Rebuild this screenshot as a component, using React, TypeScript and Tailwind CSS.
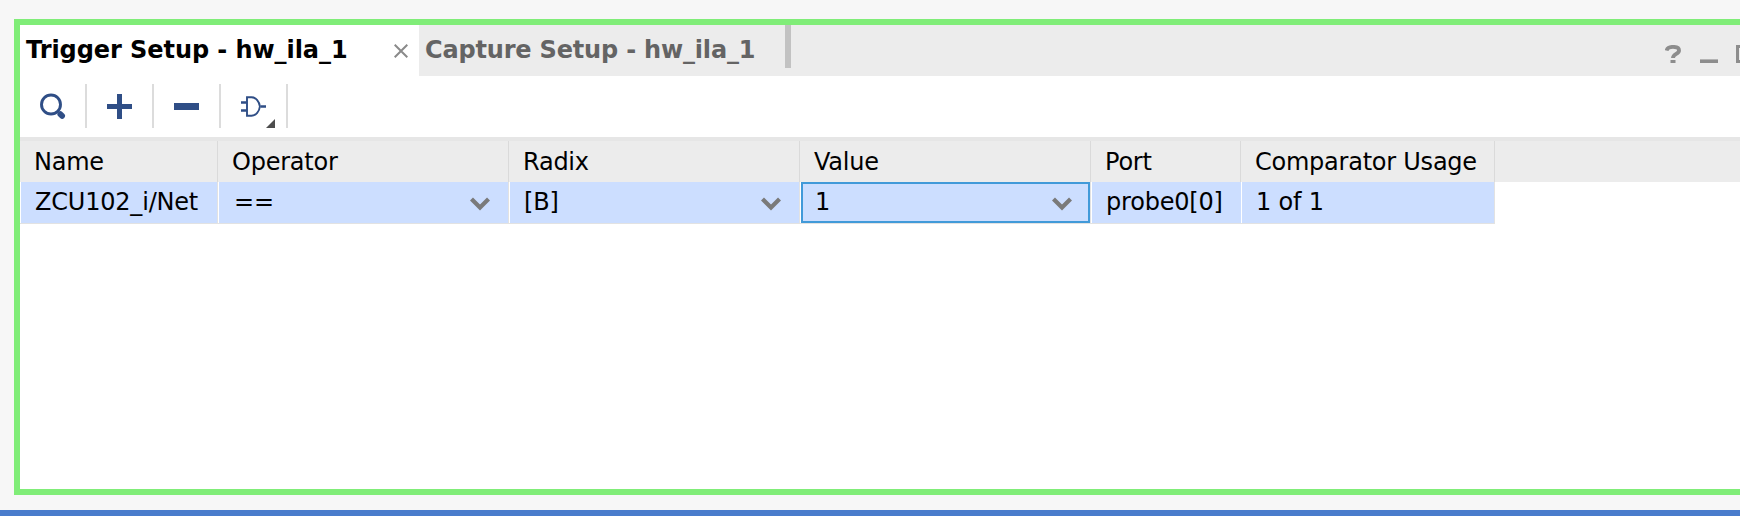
import type { ReactNode } from "react";

const columns = [
  { name: "Name", width: "w-[198px]", value: "ZCU102_i/Net", combo: false },
  { name: "Operator", width: "w-[291px]", value: "==", combo: true },
  { name: "Radix", width: "w-[291px]", value: "[B]", combo: true },
  { name: "Value", width: "w-[291px]", value: "1", combo: true },
  { name: "Port", width: "w-[150px]", value: "probe0[0]", combo: false },
  { name: "Comparator Usage", width: "w-[254px]", value: "1 of 1", combo: false },
];

function Tool({ label, children }: { label: string; children: ReactNode }) {
  return (
    <button
      aria-label={label}
      className="flex h-[44px] w-[67px] shrink-0 items-center border-r-2 border-[#dcdcdc]"
    >
      {children}
    </button>
  );
}

function Chevron() {
  return (
    <svg width="20" height="14" viewBox="0 0 20 14" className="shrink-0">
      <path d="M1.5 2 10 10.5 18.5 2" fill="none" stroke="#7a7a7a" strokeWidth="4.2" />
    </svg>
  );
}

export default function App() {
  return (
    <div className="flex h-[521px] w-[1740px] flex-col overflow-hidden bg-[#f7f7f7] font-['DejaVu_Sans',sans-serif] text-[24px] leading-[28px] text-black">
      <div className="mt-[19px] ml-[14px] flex h-[476px] shrink-0 flex-col border-y-[6px] border-l-[6px] border-[#80ed78] bg-white">
        <div className="flex h-[51px] shrink-0 bg-[#ececec] font-bold">
          <div className="flex w-[399px] shrink-0 bg-white pt-[11px] pl-[6px]">
            <span className="w-[368px] tracking-[-0.07px] whitespace-nowrap">Trigger Setup - hw_ila_1</span>
            <svg width="14" height="14" viewBox="0 0 14 14" className="mt-[8px] shrink-0">
              <path d="M.7.7 13.3 13.3M13.3.7.7 13.3" stroke="#8a8a8a" strokeWidth="2" />
            </svg>
          </div>
          <span className="w-[366px] shrink-0 pt-[11px] pl-[6px] tracking-[-0.18px] whitespace-nowrap text-[#646464]">
            Capture Setup - hw_ila_1
          </span>
          <div className="h-[43px] w-[6px] shrink-0 bg-[#c2c2c2]" />
          <div className="ml-auto flex shrink-0 pt-[20px]">
            <svg width="16" height="18" viewBox="0 0 16 18">
              <path d="M1.6 5.6C2.2 3 4.500 1.900 8 1.900s6 1.100 6 3.500c0 3.600-6 3.300-6 7.600" fill="none" stroke="#8d8d8d" strokeWidth="3.900" />
              <path d="M5.500 15h5v3h-5z" fill="#8d8d8d" />
            </svg>
            <div className="mt-[14px] ml-[19px] h-[4px] w-[18px] border-t border-[#b4b4b4] bg-[#8d8d8d]" />
            <div className="ml-[18px] h-[18px] w-[4px] border-y-[3px] border-l-[3px] border-[#8d8d8d]" />
          </div>
        </div>

        <div className="flex h-[61px] shrink-0 pt-[8px]">
          <Tool label="Search">
            <svg width="26" height="26" viewBox="0 0 26 26" className="ml-[20px]">
              <circle cx="11" cy="11.500" r="9.500" fill="none" stroke="#2f4e86" strokeWidth="2.900" />
              <path d="m20.300 21.200 1.800 1.700" stroke="#2f4e86" strokeWidth="5.800" strokeLinecap="round" />
            </svg>
          </Tool>
          <Tool label="Add">
            <svg width="25" height="25" viewBox="0 0 25 25" className="ml-[20px]">
              <path d="M10 0h5v10h10v5H15v10h-5V15H0v-5h10z" fill="#2f4e86" />
            </svg>
          </Tool>
          <Tool label="Remove">
            <div className="ml-[20px] h-[7px] w-[25px] bg-[#2f4e86]" />
          </Tool>
          <Tool label="Trigger condition">
            <svg width="34" height="44" viewBox="0 0 34 44" className="ml-[20px]">
              <path d="M6 13.200h4.500C15 13.200 18.400 18 18.900 22.500 18.400 27 15 31.800 10.500 31.800H6z" fill="none" stroke="#2f4e86" strokeWidth="1.900" />
              <path d="M0 18.500h5.500M0 26.500h5.500M19.500 22.500H25" stroke="#2f4e86" strokeWidth="2.600" />
              <path d="M34 35v9h-9z" fill="#4d4d4d" />
            </svg>
          </Tool>
        </div>

        <div className="h-[4px] shrink-0 bg-[#e6e6e6]" />
        <div className="flex h-[41px] shrink-0 bg-[#ececec] tracking-[-0.24px]">
          {columns.map((c) => (
            <div
              key={c.name}
              className={`${c.width} shrink-0 border-r border-[#dadada] pt-[7px] pl-[14px] whitespace-nowrap`}
            >
              {c.name}
            </div>
          ))}
        </div>
        <div className="flex h-[42px] shrink-0 tracking-[-0.2px]">
          {columns.map((c) => (
            <div
              key={c.name}
              className={`${c.width} flex shrink-0 border-r border-b border-[#e2e2e2] bg-white pl-px`}
            >
              <div
                className={`flex flex-1 bg-[#ccdeff] whitespace-nowrap ${
                  c.name === "Value"
                    ? "border-2 border-[#419ad9] pt-[4px] pr-[16px] pl-[12px]"
                    : "pt-[6px] pr-[18px] pl-[14px]"
                }`}
              >
                <span className={c.value === "==" ? "flex-1 pl-px" : "flex-1"}>{c.value}</span>
                {c.combo && (
                  <span className="pt-[9px]">
                    <Chevron />
                  </span>
                )}
              </div>
            </div>
          ))}
        </div>
      </div>
      <div className="mt-[15px] h-[6px] shrink-0 bg-[#4a7ccc]" />
      <div className="flex-1 bg-white" />
    </div>
  );
}
